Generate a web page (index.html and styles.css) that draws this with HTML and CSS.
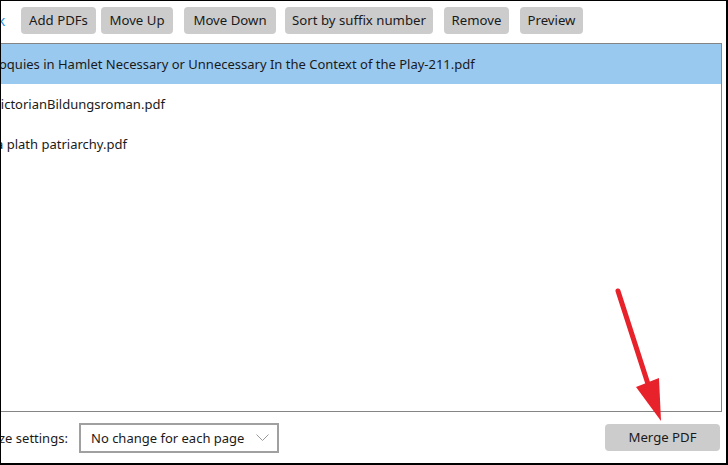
FILE: index.html
```html
<!DOCTYPE html>
<html>
<head>
<meta charset="utf-8">
<link rel="stylesheet" href="styles.css">
</head>
<body>
<div class="frame">
  <div class="toolbar">
    <span class="back">Back</span>
    <button class="btn b-add">Add PDFs</button>
    <button class="btn b-up">Move Up</button>
    <button class="btn b-down">Move Down</button>
    <button class="btn b-sort">Sort by suffix number</button>
    <button class="btn b-remove">Remove</button>
    <button class="btn b-preview">Preview</button>
  </div>
  <div class="list">
    <div class="row selected"><span class="name n1">oquies in Hamlet Necessary or Unnecessary In the Context of the Play-211.pdf</span></div>
    <div class="row"><span class="name n2">VictorianBildungsroman.pdf</span></div>
    <div class="row"><span class="name n3">a plath patriarchy.pdf</span></div>
  </div>
  <div class="bottom">
    <span class="label">ze settings:</span>
    <div class="select">
      <span class="sel-text">No change for each page</span>
      <svg class="chev" width="13" height="7" viewBox="0 0 13 7"><path d="M0.5 0.5 L6.5 6.5 L12.5 0.5" fill="none" stroke="#9a9a9a" stroke-width="1"/></svg>
    </div>
    <div class="spacer"></div>
    <button class="btn merge">Merge PDF</button>
  </div>
  <svg class="arrow" width="728" height="465" viewBox="0 0 728 465">
    <line x1="618" y1="291" x2="648" y2="384" stroke="#e8222b" stroke-width="5" stroke-linecap="round"/>
    <polygon points="636,387 659,378 661,421" fill="#e8222b"/>
  </svg>
</div>
</body>
</html>
```
FILE: styles.css
```css
* { box-sizing: border-box; }
html, body { margin: 0; padding: 0; width: 728px; height: 465px; overflow: hidden; background: #fff; }
body { font-family: "Noto Sans", "Open Sans", sans-serif; font-size: 13px; color: #000; }
.frame {
  position: relative;
  width: 728px; height: 465px;
  border-style: solid; border-color: #000;
  border-width: 1px 2px 2px 1px;
  display: flex; flex-direction: column;
  overflow: hidden;
}
.toolbar {
  height: 42px;
  display: flex; align-items: flex-start;
  padding-top: 6px;
}
.back {
  color: #2a8ee6; font-size: 14px;
  margin-left: -27px; width: 47px;
  line-height: 27px;
}
.btn {
  font-family: inherit; font-size: 13.2px; color: #1a1a1a;
  background: #cccccc; border: none; border-radius: 4px;
  height: 27px; padding: 0; margin: 0;
  line-height: 27px; white-space: nowrap; text-align: center;
  flex: none;
}
.b-add { width: 75px; }
.b-up { margin-left: 5px; width: 72px; }
.b-down { margin-left: 11px; width: 92px; }
.b-sort { margin-left: 9px; width: 148px; }
.b-remove { margin-left: 11px; width: 65px; }
.b-preview { margin-left: 11px; width: 63px; }
.list {
  flex: 1;
  margin-left: -10px; margin-right: 4px;
  border: 1px solid #858585;
  overflow: hidden;
}
.row {
  height: 40px; display: flex; align-items: center;
  padding-left: 9px; white-space: nowrap; font-size: 13px;
  color: #1a1a1a;
}
.row.selected { background: #99c9ef; }
.n1 { margin-left: -2px; }
.n2 { margin-left: -8px; }
.n3 { margin-left: -5px; }
.bottom {
  height: 51px; display: flex; align-items: center;
  padding-right: 6px;
}
.label { font-size: 13px; margin-left: -2px; width: 80px; white-space: nowrap; color: #1a1a1a; }
.select {
  width: 200px; height: 30px;
  border: 2px solid #a0a0a0;
  display: flex; align-items: center; justify-content: space-between;
  padding: 0 8px 0 10px; font-size: 13px; color: #1a1a1a;
}
.sel-text { white-space: nowrap; }
.chev { margin-bottom: 1px; }
.spacer { flex: 1; }
.merge { width: 115px; height: 27px; }
.arrow { position: absolute; left: -1px; top: -1px; pointer-events: none; }
```
